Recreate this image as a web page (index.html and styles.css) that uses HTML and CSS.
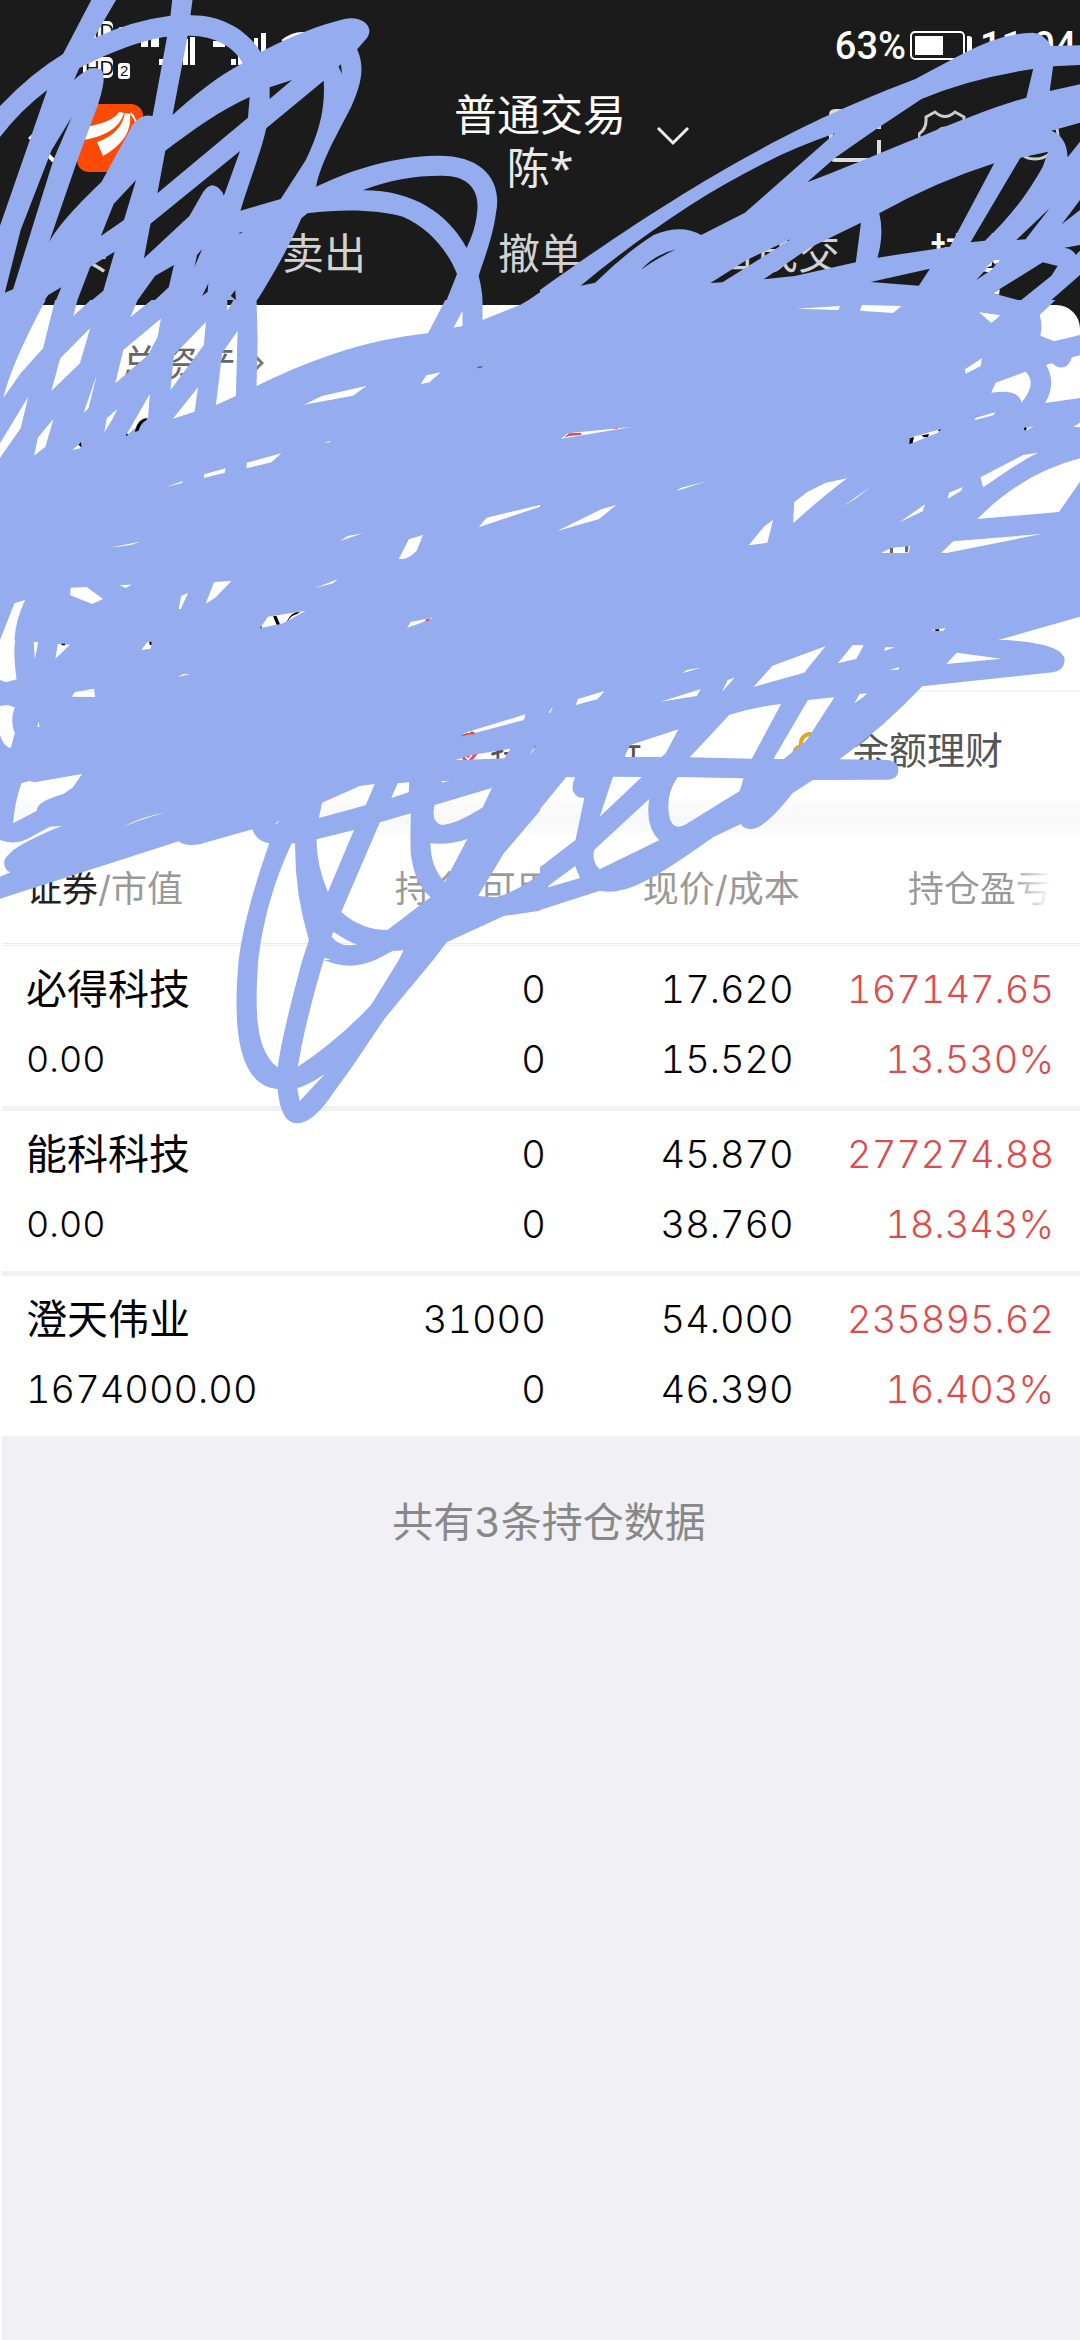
FILE: index.html
```html
<!DOCTYPE html>
<html lang="zh-CN">
<head>
<meta charset="utf-8">
<meta name="viewport" content="width=device-width, initial-scale=1">
<title>普通交易</title>
<link rel="stylesheet" href="styles.css">
</head>
<body>
<header class="top">
  <div class="status">
    <svg class="signals" width="250" height="66" viewBox="0 0 250 66" aria-hidden="true">
      <g fill="#fff">
        <rect x="3" y="8" width="30" height="20" rx="5"/><rect x="38" y="14" width="11" height="14" rx="3"/>
        <rect x="3" y="44" width="30" height="21" rx="5"/><rect x="38" y="50" width="12" height="16" rx="3"/>
        <path d="M61 20h7v14h-7zM71 20h8v14h-8zM79 46h5v6h-5zM88 40h7v12h-7zM103 26h5v26h-5zM110 24h5v28h-5zM133 28h12v6h-12zM151 46h5v6h-5zM158 40h6v12h-6zM174 25h4v27h-4zM181 20h5v32h-5z"/>
      </g>
      <g class="badge"><text x="5" y="25">HD</text><text x="5" y="62">HD</text><text x="40" y="63" font-size="15">2</text></g>
      <path d="M203 29Q222 14 241 29M213 41Q222 32 235 40" fill="none" stroke="#fff" stroke-width="5"/>
    </svg>
    <span class="battery-text">63%</span>
    <svg class="battery" width="64" height="30" viewBox="0 0 64 30" aria-hidden="true"><rect x="1" y="1" width="53" height="27" rx="4" fill="none" stroke="#fff" stroke-width="2"/><path d="M5 5h28v19H5zM57 5h2q3 0 3 3v13q0 3-3 3h-2z" fill="#fff"/></svg>
    <span class="clock">11:04</span>
  </div>
  <div class="bar">
    <div class="bar-left">
      <button class="icon" aria-label="返回"><svg width="28" height="50" viewBox="0 0 28 50"><path d="M25 3L3 25l22 22" fill="none" stroke="#fff" stroke-width="4" stroke-linecap="round"/></svg></button>
      <svg width="66" height="68" viewBox="0 0 66 68" aria-hidden="true"><rect width="66" height="68" rx="12" fill="#ff4a06"/><path d="M7 23Q35 19 42 8L47 9Q41 30 7 36zM20 38Q44 30 48 9L53 10Q56 35 26 52zM54 8Q61 15 60 26Q58 15 53 10z" fill="#fff"/></svg>
    </div>
    <h1 class="title">普通交易<span class="holder">陈*</span></h1>
    <div class="bar-right">
      <button class="icon" aria-label="切换账户"><svg width="34" height="20" viewBox="0 0 34 20"><path d="M2 2l15 15L32 2" fill="none" stroke="#eee" stroke-width="3"/></svg></button>
      <span class="tools">
        <button class="icon" aria-label="消息"><svg width="54" height="54" viewBox="0 0 54 54"><path d="M51 20V6q0-4-4-4H7Q3 2 3 6v40q0 5 4 5h44V31" fill="none" stroke="#ddd" stroke-width="4"/></svg></button>
        <button class="icon" aria-label="设置"><svg width="54" height="54" viewBox="0 0 54 54"><path d="M17 3q10 9 20 0l9 5q-1 12 7 17v8q-8 4-7 13l-9 5q-10-9-20 0l-9-5q1-9-7-13v-8q8-5 7-17z" fill="none" stroke="#ccc" stroke-width="3"/><circle cx="27" cy="28" r="9" fill="none" stroke="#ccc" stroke-width="3"/></svg></button>
        <button class="icon" aria-label="帮助"><svg width="54" height="54" viewBox="0 0 54 54"><circle cx="27" cy="27" r="23" fill="none" stroke="#ccc" stroke-width="3"/></svg></button>
      </span>
    </div>
  </div>
  <nav class="tabs">
    <a href="#buy">买入</a><a href="#sell">卖出</a><a href="#cancel">撤单</a><a href="#deals">当日成交</a><a class="active" href="#hold">持仓</a>
  </nav>
</header>
<main class="page">
  <div class="asset-wrap"><section class="assets"><a class="total" href="#assets">总资产<svg width="12" height="20" viewBox="0 0 12 20" aria-hidden="true"><path d="M2 2l8 8-8 8" fill="none" stroke="#777" stroke-width="3"/></svg></a></section></div>
  <section class="links">
    <a class="link-analysis" href="#analysis"><svg width="32" height="34" viewBox="0 0 32 34" aria-hidden="true"><path d="M4 6l12-5 12 5v10L16 30 4 16z" fill="none" stroke="#e94b50" stroke-width="3"/><path d="M10 15l6 8 8-10" fill="none" stroke="#e94b50" stroke-width="3"/></svg>持仓分析</a>
    <a class="link-wealth" href="#wealth"><svg width="40" height="40" viewBox="0 0 40 40" aria-hidden="true"><path d="M3 26q-2-8 6-10-1-10 8-12 9 0 8 10 9 2 7 12-2 10-14 10T3 26z" fill="none" stroke="#e5a420" stroke-width="4"/></svg>余额理财</a>
  </section>
  <div class="band"></div>
  <table class="holdings">
    <colgroup><col class="c1"><col class="c2"><col class="c3"><col class="c4"></colgroup>
    <thead><tr><th><b>证券</b>/市值</th><th>持仓/可用</th><th>现价/成本</th><th><span class="fade">持仓盈亏</span></th></tr></thead>
    <tbody>
      <tr><td><span class="name">必得科技</span><div class="small">0.00</div></td><td>0<div>0</div></td><td>17.620<div>15.520</div></td><td>167147.65<div>13.530%</div></td></tr>
      <tr><td><span class="name">能科科技</span><div class="small">0.00</div></td><td>0<div>0</div></td><td>45.870<div>38.760</div></td><td>277274.88<div>18.343%</div></td></tr>
      <tr><td><span class="name">澄天伟业</span><div>1674000.00</div></td><td>31000<div>0</div></td><td>54.000<div>46.390</div></td><td>235895.62<div>16.403%</div></td></tr>
    </tbody>
  </table>
  <p class="summary">共有3条持仓数据</p>
</main>
<svg class="scribble" viewBox="0 0 1080 1130" aria-hidden="true">
  <svg x="0" y="0" width="540" height="300" viewBox="0 0 1568 900" preserveAspectRatio="none">
    <path d="M0 0H1568V900H0zM0 0H265L183 162Q90 220 0 318zM337 0H500L495 47Q380 62 272 115zM559 0L553 46C650 45 720 95 757 156C850 105 930 75 1000 57C1050 45 1090 80 1065 115L1037 148C1060 200 1050 250 1020 320C980 400 930 490 918 560C1000 520 1120 470 1270 467C1400 465 1460 540 1440 640C1430 720 1400 790 1390 828Q1400 870 1401 900H1535L1568 877V0zM1053 571C1130 540 1200 527 1280 527C1360 525 1395 570 1385 640C1380 690 1365 720 1355 744C1300 640 1200 570 1053 571zM893 640C1000 625 1100 630 1170 650C1240 680 1300 750 1327 822L1297 900H747C790 830 840 740 875 655zM940 242C945 330 925 400 888 480L815 597L698 632C725 540 760 450 773 385zM783 262L848 240L783 297zM983 200L990 193L993 222zM485 110C420 118 320 155 230 205L215 240C250 205 275 198 295 210C305 230 303 250 285 313L225 480L143 725C180 660 250 590 295 545L385 375Q410 340 443 348zM545 107C620 105 680 140 705 190C630 230 560 290 501 345zM725 291L720 353L457 580L480 452C560 390 640 330 725 291zM697 453L437 671L418 775L550 648L582 590Q600 555 618 556Q640 560 650 587zM395 540L360 660L293 708L330 612zM333 755L262 800L225 900H268L300 872zM505 795L490 862L450 900H400L450 828zM587 747L572 765L565 800zM605 850L587 888L603 875zM683 870L670 888L685 900zM690 700L705 695L700 700zM0 411Q60 330 137 270L0 677zM208 352L155 480L38 868L14 878L60 690L150 450zM178 862L163 900H130L140 885z"/>
  </svg>
  <svg x="540" y="0" width="540" height="300" viewBox="0 0 1568 900" preserveAspectRatio="none">
    <path d="M0 0H1568V900H0zM0 0H1568V136L1483 138Q1465 100 1430 98Q1340 100 1230 160L1090 237C800 350 500 500 0 870zM1490 199L1568 195V253L1480 273zM1432 207L1412 293C1250 340 1000 460 776 547L855 475L980 385L1108 297Q1250 235 1432 207zM857 400L595 638L468 705Q410 670 330 705C260 750 200 810 160 848L118 857C350 660 600 490 857 400zM395 748Q330 780 293 810Q330 765 395 748zM733 715L530 847L495 849L600 780zM932 668L917 787L740 828L650 838L780 745zM985 640Q1150 545 1319 490L1190 740L980 773Q1000 700 985 640zM1395 473L1475 455L1460 500Q1390 630 1292 722L1250 727zM1568 368L1485 392Q1530 410 1532 472L1568 425zM1480 625L1410 718L1383 720zM1568 600L1515 673L1568 630zM1132 806L1100 857L960 846zM1335 780L1310 810L1267 840L1315 785zM1460 787L1503 798L1485 827L1395 902L1315 880zM1523 743Q1550 748 1555 765L1568 752V735zM1568 825L1485 900H1568z"/>
    <path d="M1315 880l20-12-2 16zM1295 802l18-16-2 12zM1316 781l19-1-14 14z" class="white"/>
  </svg>
  <svg x="0" y="300" width="540" height="340" viewBox="0 0 1568 1020" preserveAspectRatio="none">
    <path d="M0 0H1568V1020H0zM160 0L125 145L60 220L10 293Q30 200 125 14L133 0zM225 0H263L213 48zM400 0H440L378 52zM660 0H678L660 32zM262 84L232 190L149 273L175 175zM467 56L458 110L430 165L335 250L358 150zM598 66L592 135L495 270L505 165zM690 92L685 288L627 315L645 160zM745 0H1293L1243 100C1050 120 880 190 745 258L748 120zM1343 32V78L1317 83zM1401 0H1535L1510 15L1401 60zM281 225L257 325L243 338zM82 290L60 385L0 473V430zM155 357L132 440L99 467L110 413zM341 327L325 360L303 397L310 355zM435 282L430 352L365 408zM575 262L565 335L502 356zM1065 257L1025 287L882 314L935 288zM1280 217L1247 247L1222 252L1238 226zM235 428L233 445L210 450zM817 460L788 487L715 505L717 488zM655 505L653 518L592 534L593 523zM531 543L529 549L485 560zM1568 615V620L1390 682L1413 653zM405 725L380 735L318 743zM1054 700L1023 710L987 723L1010 708zM1228 705L1210 752Q1185 780 1158 777L1187 718zM205 863L252 861L299 897L268 912L204 886zM347 855L382 854L365 864zM672 843L625 893L597 911L622 846zM546 879L525 927H519L526 888zM980 838L967 850L916 864zM73 900Q45 960 42 1020H0L42 910zM888 932L822 970L755 985L778 950zM1260 952L1220 970L1182 983L1193 966zM960 422L957 427L942 429z"/>
    <path d="M793 948h10l10 25-10 1zM833 964q13-29 38-28l-8 6q-17 4-27 20zM392 396Q398 357 427 354l-2 7Q410 368 402 392zM228 435l7-9 2 16zM365 408l3-8 4 5zM755 985l4-7 1 6z" class="black"/>
    <path d="M1236 958l14-3-4 6-10 4z" class="red"/>
    <path d="M1383 205l8-6h12l-7 5z" class="gray"/>
  </svg>
  <svg x="540" y="300" width="540" height="340" viewBox="0 0 1568 1020" preserveAspectRatio="none">
    <path d="M0 0H1568V1020H0zM745 26L871 18L867 30zM935 15L1050 18L1025 39L929 32zM1275 37L1337 46L1311 69zM1497 0H1568V105L1493 124L1453 107Q1460 75 1451 45zM1283 175L1280 198L1236 221L1234 208zM1410 215Q1445 250 1398 308Q1390 265 1310 278L1323 248zM1470 195Q1490 185 1497 198Q1530 215 1545 172L1568 166V294L1467 309Q1500 250 1470 195zM1322 337L1318 345L1261 361L1266 353zM1435 378L1410 392L1402 388zM1568 368L1549 380L1568 382zM265 381L61 416L80 400zM1164 388L1155 398L1072 433L1078 412zM1447 458C1400 480 1340 525 1287 562L1279 532L1403 465zM1568 475V545L1507 636L1270 657Q1400 520 1568 475zM480 545L396 573L410 563zM892 535Q820 590 735 670L738 607L775 577L830 548zM965 557L915 597L880 619zM1228 561L1223 572L1184 596L1188 578zM1118 613L1111 634L1045 666zM221 615L172 657L50 693L178 628zM677 659L660 728L606 736L650 680zM1075 738L1070 759H990L1020 744zM1456 702L1180 759H1165L1200 724zM1568 950V1020H1330L1345 1016zM1178 984L1170 993L1133 991z"/>
    <path d="M69 413l15-13 37-2-3 7-34 3zM212 385l12-2v4z" class="red"/>
    <path d="M1072 433l2-18 12-4-4 18zM1108 406l22-4-4 9-12 1zM1404 388l4-6 6 3-4 7zM1155 391l9-4-3 7zM1148 988h11v5h-11z" class="black"/>
    <path d="M1016 744h9v15h-9zM1060 739h10l-2 18h-8z" class="gray"/>
  </svg>
  <svg x="0" y="640" width="540" height="320" viewBox="0 60 1568 960" preserveAspectRatio="none">
    <path d="M0 60H1568V1020H0zM0 60H44Q38 100 48 178L18 187L0 180zM98 65L111 67L101 118zM168 72L203 74L161 116zM430 64L441 68L437 86L410 90zM552 162L518 171L530 163zM208 230L218 216L273 206L276 231zM0 258L22 255L43 262Q28 300 43 340L31 384Q10 380 0 345zM112 305L115 320H108zM1526 283L1521 300L1337 350L1350 338zM1482 386L1465 415L1320 421L1370 405zM1557 373L1550 390L1538 405zM62 490L85 483L100 487L238 462L212 502L183 523Q105 545 107 572L38 610Q42 550 62 490zM180 618C100 650 20 690 12 725Q12 750 30 757L0 770V660Q50 680 100 645L145 620zM477 578Q400 600 353 623Q410 590 477 578zM812 599L806 610L798 612zM1088 492L1062 556L926 594L935 548L1045 498zM1155 490L1188 487L1187 517L1136 534zM1428 504L1402 562Q1330 610 1285 615Q1250 610 1262 555zM1305 483L1283 488L1281 484zM0 836L519 664Q535 680 580 673L733 628Q745 665 782 670Q710 880 693 1020H0zM847 670H857Q855 820 897 960L878 1020H750Q770 840 847 670zM919 658L1028 630L952 816Q920 740 919 658zM1103 607L1193 580Q1190 700 1195 715Q1205 790 1250 832L1125 930Q1050 930 991 876zM1250 670Q1310 675 1357 657L1291 786Q1250 740 1250 670zM968 935Q1010 965 1037 973Q990 985 963 950zM943 1013L960 1020H940zM1140 993L1172 991L1158 1020H1090zM1568 572L1463 700L1388 828L1440 832Q1500 815 1568 762zM1568 872L1463 888L1297 967L1258 1020H1568z"/>
    <path d="M178 71h12l-2 5h-8zM433 65h7v10h-5z" class="black"/>
    <path d="M1360 342l9-8 9 3-1 7z" class="red"/>
  </svg>
  <svg x="540" y="640" width="540" height="320" viewBox="0 60 1568 960" preserveAspectRatio="none">
    <path d="M0 60H1568V1020H0zM1355 60Q1530 72 1523 125Q1520 150 1490 157L1110 199Q1000 320 870 418L1010 420Q1040 425 1041 450Q1040 475 1015 479L792 480L733 520Q650 630 610 627Q590 625 583 612L505 650C380 740 280 815 200 815L172 813L0 870V1020H1568V60zM829 79L767 158L620 201L675 137zM908 75L940 76L919 116L865 130zM1003 82H1031L999 93zM1210 98L1340 116L1180 132zM467 143L415 159L425 150zM565 173L528 216L545 180zM1044 141L1040 149L1015 150zM187 213L168 237L104 255L110 237zM467 207L455 228L350 245zM950 220L938 232L913 250L928 222zM38 258L30 278H25zM855 232L773 362L708 417H678L778 240zM700 252L615 416L435 412L550 284Q620 262 700 252zM402 328L365 400L353 411H245L262 375zM76 471L102 472Q90 500 97 515Q105 535 129 533L103 660L0 742V568zM212 470L295 471L173 591zM400 471L591 475L580 513L420 615Q390 630 378 600Q360 530 400 471zM317 537Q305 620 346 661L173 748Q150 725 157 690zM102 738L116 774L15 805z"/>
  </svg>
  <svg x="0" y="960" width="540" height="170" viewBox="0 180 1568 510" preserveAspectRatio="none">
    <path d="M693 180C680 330 675 555 806 567Q815 670 862 670Q910 670 970 575C1020 510 1080 410 1120 352L1258 180zM750 180C740 330 740 450 806 502Q820 400 878 180zM940 180Q980 197 1015 197Q1050 197 1090 180H1158L1077 316Q970 430 865 500Q885 370 940 180zM863 565Q905 550 944 521L870 604z"/>
  </svg>
</svg>
</body>
</html>
```

FILE: styles.css
```css
* { box-sizing: border-box; }
body {
  position: relative;
  margin: 0;
  min-height: 100vh;
  display: flex;
  flex-direction: column;
  background: #fff;
  color: #000;
  font-family: Inter, "Noto Sans CJK SC", sans-serif;
  font-variant-numeric: tabular-nums;
}
a { color: inherit; text-decoration: none; }
svg { display: block; flex: none; }

.top { background: #1b1b1b; color: #fff; font-family: "Noto Sans CJK SC", sans-serif; }
.status {
  display: flex;
  align-items: center;
  height: 84px;
  padding: 8px 10px 0 80px;
  font: 500 38px/40px Roboto, sans-serif;
}
.signals { margin-right: auto; }
.badge { fill: #111; font: 20px "Liberation Sans", sans-serif; }
.battery { margin: 0 6px 0 4px; }
.clock { width: 90px; white-space: nowrap; }

.bar { display: grid; grid-template-columns: 1fr auto 1fr; align-items: center; }
.bar-left { display: flex; align-items: center; gap: 21px; padding: 0 0 4px 28px; }
.title { margin: 0; font-size: 43px; line-height: 56px; font-weight: 400; text-align: center; }
.holder { display: block; color: #e8e8e8; font-family: "Noto Sans", "Noto Sans CJK SC", sans-serif; }
.bar-right { display: flex; align-items: center; justify-content: space-between; padding: 0 18px 8px 30px; }
.tools { display: flex; gap: 36px; }
.icon { display: block; padding: 0; border: 0; background: none; }

.tabs {
  display: grid;
  grid-template-columns: repeat(5, 1fr);
  padding: 25px 0 24px;
  font-size: 42px;
  line-height: 60px;
  color: #d2d2d2;
  text-align: center;
  white-space: nowrap;
}
.tabs .active { color: #fff; font-weight: 500; }

.page { flex: 1; display: flex; flex-direction: column; background: #fff; }
.asset-wrap { background: #1b1b1b; }
.assets { min-height: 387px; padding: 34px 0 0 122px; background: #fff; border-radius: 0 24px 0 0; border-bottom: 2px solid #f4f4f5; }
.total { display: inline-flex; align-items: center; gap: 16px; color: #666; font-size: 38px; line-height: 48px; }
.links {
  display: grid;
  grid-template-columns: 452px 340px 1fr;
  height: 108px;
  align-items: center;
  padding-top: 8px;
  color: #555;
  font-size: 38px;
  line-height: 56px;
}
.links a { display: flex; align-items: center; }
.link-analysis { grid-column: 2; gap: 6px; }
.link-wealth { grid-column: 3; gap: 19px; }
.band { height: 36px; background: linear-gradient(#fcfcfc, #f7f7f7 60%, #fdfdfd); }

.holdings {
  width: calc(100% - 2px);
  margin-left: 2px;
  table-layout: fixed;
  border-collapse: separate;
  border-spacing: 0;
  font-size: 38px;
  line-height: 70px;
}
.c1 { width: 25%; }
.c2 { width: 26%; }
.c3 { width: 23%; }
.c4 { width: 26%; }
.holdings th {
  height: 110px;
  padding: 0 0 2px;
  border-bottom: 3px double #ececf0;
  color: #999;
  font-size: 36px;
  line-height: 48px;
  font-weight: 400;
  text-align: right;
}
.holdings b { color: #222; font-weight: 400; }
.holdings td { padding: 8px 6px 12px 0; border-bottom: 5px solid #f0f0f5; text-align: right; font-weight: 300; }
.holdings tr > :first-child { padding-left: 24px; text-align: left; }
.holdings th:last-child { padding-right: 28px; }
.holdings td:last-child { padding-right: 26px; color: #dc4c4c; }
.holdings .name { display: block; font-size: 41px; font-weight: 400; }
.holdings .small { font-size: 36px; }
.fade { background: linear-gradient(90deg, #999 70%, #fff); background-clip: text; -webkit-background-clip: text; color: transparent; }
.summary { flex: 1; margin: 0 0 0 2px; padding: 46px 0 0 16px; background: #f0f0f5; color: #888; font-size: 41px; line-height: 70px; text-align: center; }

.scribble { position: absolute; top: 0; left: 0; width: 100%; fill: #95adee; fill-rule: evenodd; pointer-events: none; }
.white { fill: #fff; }
.black { fill: #000; }
.red { fill: #dc4c4c; }
.gray { fill: #666; }
```
